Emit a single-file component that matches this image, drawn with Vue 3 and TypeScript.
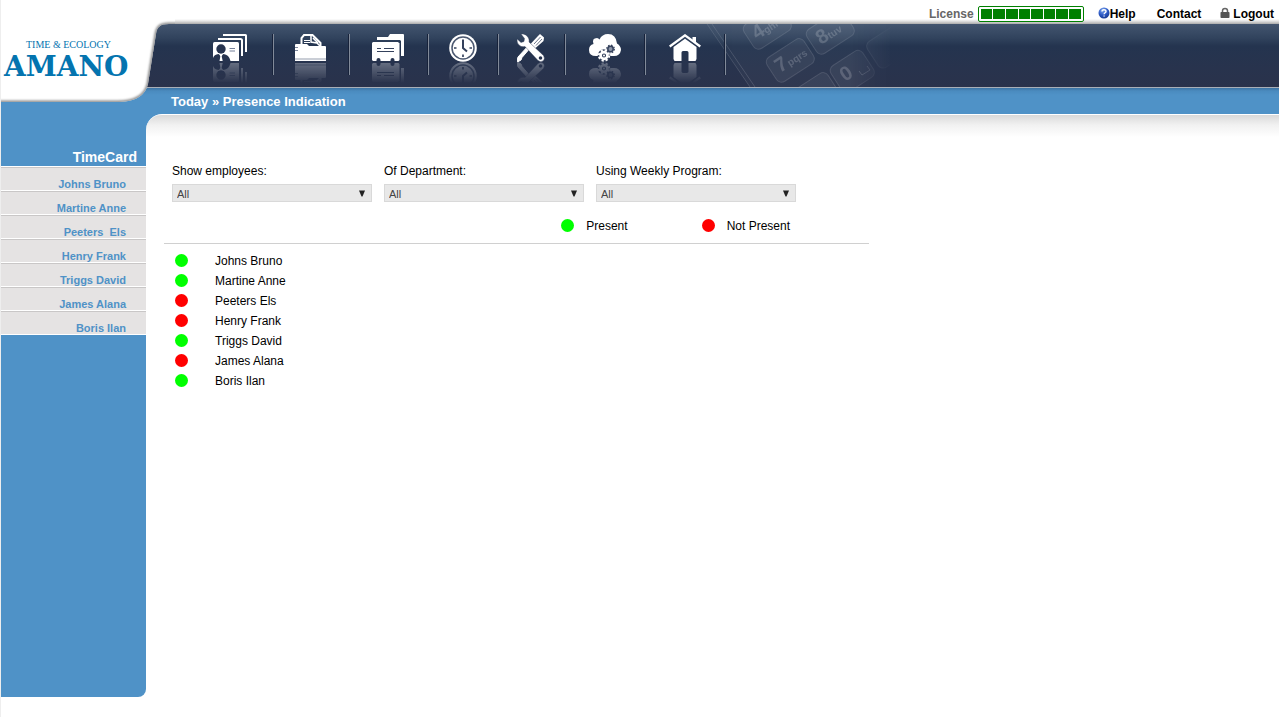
<script setup lang="ts">
import { computed, ref } from 'vue'

interface Employee {
  name: string
  sideName: string
  present: boolean
}

interface MenuEntry {
  id: string
  label: string
  iconWidth: number
  cellWidth: number
}

const employees: Employee[] = [
  { name: 'Johns Bruno', sideName: 'Johns Bruno', present: true },
  { name: 'Martine Anne', sideName: 'Martine Anne', present: true },
  { name: 'Peeters Els', sideName: 'Peeters\u00a0 Els', present: false },
  { name: 'Henry Frank', sideName: 'Henry Frank', present: false },
  { name: 'Triggs David', sideName: 'Triggs David', present: true },
  { name: 'James Alana', sideName: 'James Alana', present: false },
  { name: 'Boris Ilan', sideName: 'Boris Ilan', present: true },
]

const menu: MenuEntry[] = [
  { id: 'employees', label: 'Employees', iconWidth: 34, cellWidth: 85 },
  { id: 'cards', label: 'Cards', iconWidth: 32, cellWidth: 76 },
  { id: 'reports', label: 'Reports', iconWidth: 32, cellWidth: 79 },
  { id: 'time', label: 'Time', iconWidth: 28, cellWidth: 70 },
  { id: 'tools', label: 'Tools', iconWidth: 28, cellWidth: 67 },
  { id: 'cloud', label: 'Cloud settings', iconWidth: 32, cellWidth: 80 },
  { id: 'home', label: 'Home', iconWidth: 32, cellWidth: 80 },
]

const filters = [
  { id: 'show', label: 'Show employees:' },
  { id: 'department', label: 'Of Department:' },
  { id: 'program', label: 'Using Weekly Program:' },
]

const show = ref<Record<string, string>>({ show: 'All', department: 'All', program: 'All' })

const rows = computed(() =>
  employees.filter((e) => {
    if (show.value.show === 'Present') return e.present
    if (show.value.show === 'Not Present') return !e.present
    return true
  }),
)
</script>

<template>
  <div class="page">
    <header class="header">
      <div class="utility">
        <span class="license-label">License</span>
        <div class="license" role="img" aria-label="License usage">
          <i v-for="n in 8" :key="n"></i>
        </div>
        <a class="util-link help" href="#">
          <svg width="12" height="12" viewBox="0 0 12 12" aria-hidden="true">
            <defs>
              <radialGradient id="helpFill" cx="40%" cy="25%" r="75%">
                <stop offset="0" stop-color="#7fa8ee" />
                <stop offset="0.6" stop-color="#2a57c4" />
                <stop offset="1" stop-color="#173a93" />
              </radialGradient>
            </defs>
            <circle cx="6" cy="6" r="5.5" fill="url(#helpFill)" />
            <path d="M4 4.6C4 2.2 8 2.2 8 4.4C8 5.8 6.1 5.7 6.1 7.2M6.1 8.4V9.6" fill="none" stroke="#fff" stroke-width="1.4" />
          </svg>Help</a>
        <a class="util-link contact" href="#">Contact</a>
        <a class="util-link logout" href="#">
          <svg width="10" height="12" viewBox="0 0 10 12" aria-hidden="true">
            <path d="M2.5 6V3.8C2.5 0.6 7.5 0.6 7.5 3.8V6" fill="none" stroke="#666" stroke-width="1.5" />
            <rect x="0.5" y="5" width="9" height="6" rx="0.8" fill="#555" />
          </svg>Logout</a>
      </div>

      <nav class="navbar" aria-label="Main">
        <svg class="keypad" width="200" height="63" viewBox="0 0 200 63" aria-hidden="true">
          <defs>
            <linearGradient id="keypadFade" x1="0" x2="1" y1="0" y2="0">
              <stop offset="0" stop-color="#fff" stop-opacity="0.7" />
              <stop offset="0.2" stop-color="#fff" />
              <stop offset="0.75" stop-color="#fff" />
              <stop offset="0.97" stop-color="#fff" stop-opacity="0" />
            </linearGradient>
            <mask id="keypadMask"><rect width="200" height="63" fill="url(#keypadFade)" /></mask>
          </defs>
          <g mask="url(#keypadMask)">
            <path d="M7 0L50 63H190V0Z" fill="#fff" fill-opacity="0.03" />
            <path d="M12 0L55 63M7 0L50 63" stroke="#fff" stroke-opacity="0.14" fill="none" />
            <g fill="#fff" fill-opacity="0.05" stroke="#fff" stroke-opacity="0.12">
              <rect x="-22" y="-14" width="44" height="29" rx="6" transform="translate(67 3) rotate(-33)" />
              <rect x="-22" y="-14" width="44" height="29" rx="6" transform="translate(90 36) rotate(-33)" />
              <rect x="-22" y="-14" width="44" height="29" rx="6" transform="translate(130 8) rotate(-33)" />
              <rect x="-19" y="-15" width="38" height="31" rx="6" transform="translate(152 47) rotate(-33)" />
              <rect x="-22" y="-14" width="44" height="29" rx="6" transform="translate(114 70) rotate(-33)" />
              <rect x="-22" y="-15" width="44" height="31" rx="6" transform="translate(191 21) rotate(-33)" />
            </g>
            <g class="key-text" fill="#fff" fill-opacity="0.18">
              <g transform="translate(57 16) rotate(-33)"><text class="digit">4</text><text class="letters" x="11">ghi</text></g>
              <g transform="translate(80 49) rotate(-33)"><text class="digit">7</text><text class="letters" x="12">pqrs</text></g>
              <g transform="translate(121 21) rotate(-33)"><text class="digit">8</text><text class="letters" x="11">tuv</text></g>
              <g transform="translate(145 58) rotate(-33)"><text class="digit">0</text></g>
            </g>
            <path d="M159 47l3 4 8-5-3-4" stroke="#fff" stroke-opacity="0.2" fill="none" />
          </g>
        </svg>
        <ul class="menu">
          <li v-for="item in menu" :key="item.id" :style="{ width: item.cellWidth + 'px' }">
            <a href="#" class="menu-link" :aria-label="item.label">
              <svg :width="item.iconWidth" height="28" :viewBox="`0 0 ${item.iconWidth} 28`" aria-hidden="true">
                <g v-if="item.id === 'employees'">
                  <path d="M10 1H32.5Q33 1 33 1.5V18" fill="none" stroke="#fff" stroke-width="2" />
                  <path d="M5 5H27.5Q29 5 29 6.5V22" fill="none" stroke="#fff" stroke-width="2" />
                  <path d="M1.5 8H24.5Q26 8 26 9.5V27H0V9.5Q0 8 1.5 8Z" fill="#fff" />
                  <circle cx="8" cy="15" r="4.7" fill="#26334e" />
                  <path d="M0 27V24Q1 20.5 5.5 20L8 22L10.5 20Q16 20.5 17.5 27Z" fill="#26334e" />
                  <path d="M6.5 20.5H9.5L8.7 22.5L9.7 27H6.5L7.3 22.5Z" fill="#fff" />
                  <path d="M16.5 14.5H22M16.5 17H22" stroke="#75809a" />
                </g>
                <g v-else-if="item.id === 'cards'">
                  <path d="M6.5 10V4L9 1H17.5L25.5 9V12" fill="none" stroke="#fff" stroke-width="2" />
                  <path d="M16 2V8L22 9L25 12M18 4L23 9" fill="none" stroke="#fff" stroke-width="1.5" />
                  <path d="M9 6.5H15M9 8.5H15" stroke="#fff" />
                  <path d="M0 11Q0 10 1 10H12L14 12H30Q31 12 31 13V27H0Z" fill="#fff" />
                  <path d="M0 25H31" stroke="#b9bec8" stroke-width="1.5" />
                  <path d="M0 13.5H3M0 16.5H3" stroke="#7d879c" />
                </g>
                <g v-else-if="item.id === 'reports'">
                  <path d="M5 3H16L18 0H31Q32 0 32 1V22H29V7L28 6H5Z" fill="#fff" />
                  <path d="M1 8H26L27.5 9.5V26L26.5 27H1L0 26V9Z" fill="#fff" />
                  <path d="M5 14.5H9M12 14.5H22M5 17.5H22" stroke="#34415c" />
                  <path d="M4.5 28V26Q4.5 24 6.5 24T8.5 26V28ZM18.5 28V26Q18.5 24 20.5 24T22.5 26V28Z" fill="#26334e" />
                </g>
                <g v-else-if="item.id === 'time'">
                  <circle cx="14" cy="14" r="13.8" fill="#fff" />
                  <circle cx="14" cy="14" r="11" fill="none" stroke="#4b5870" stroke-width="1.5" />
                  <path d="M14 5.5V14L18 17.5" fill="none" stroke="#34415c" stroke-width="2" />
                  <path d="M5 14H7.5M20.5 14H23M14 20.5V23" stroke="#34415c" stroke-width="1.7" />
                </g>
                <g v-else-if="item.id === 'tools'">
                  <path d="M23 0L27 3.5L26.5 7L18 14.5L13.5 10L21 2Z" fill="#fff" />
                  <path d="M23.5 3L17 10M25 5L19 11.5" stroke="#46536c" stroke-width="0.8" />
                  <path d="M14 13L5 23.5L4 26L0.5 28L0 27L1 23L12 11Z" fill="#fff" stroke="#fff" />
                  <path d="M4 0Q9 -0.5 11.5 4Q12.5 6.5 12 8L26.5 21.5Q28.5 25 26 27Q23.500 28.5 21 26.5L8 12.5Q4 13.5 1.5 10.5Q-0.5 8 0.2 5L4 8.5L7 7.5L7.5 4.5Z" fill="#fff" stroke="#26334e" stroke-width="0.4" />
                  <circle cx="23.5" cy="24" r="1.8" fill="#26334e" />
                </g>
                <g v-else-if="item.id === 'cloud'">
                  <path d="M7 22Q0 22 0 16Q0 11 4.5 10Q2.5 4 8 4Q9.5 4 10.5 5.5Q13 0 19 0Q27 0 28 9.500Q32 12 32 16Q31 22 25 22Z" fill="#fff" />
                  <circle cx="21.5" cy="15" r="2.7" fill="#8b94a6" stroke="#34415c" stroke-width="1.5" />
                  <circle cx="21.5" cy="15" r="3.8" fill="none" stroke="#34415c" stroke-width="1.3" stroke-dasharray="1.5 1.5" />
                  <circle cx="15" cy="21.5" r="6.2" fill="#34415c" />
                  <circle cx="15" cy="21.5" r="5.2" fill="none" stroke="#fff" stroke-width="2" stroke-dasharray="2.2 1.9" />
                  <circle cx="15" cy="21.5" r="3.4" fill="none" stroke="#fff" stroke-width="2.6" />
                  <circle cx="15" cy="21.5" r="1" fill="#fff" />
                </g>
                <g v-else>
                  <path d="M23.5 3H27V10L23.5 7Z" fill="#fff" />
                  <path d="M0.7 12.5L16 1.3L31.3 12.5" fill="none" stroke="#fff" stroke-width="2.2" />
                  <path d="M4.5 13L16 4.8L27.5 13V25L26.5 27H19.5V18.5Q19.5 17 18 17H14Q12.5 17 12.5 18.5V27H5.5L4.5 25Z" fill="#fff" />
                </g>
              </svg>
            </a>
          </li>
        </ul>
      </nav>

      <div class="crumbs">Today » Presence Indication</div>

      <div class="brand">
        <svg class="plate" width="174" height="104" viewBox="0 0 174 104" aria-hidden="true">
          <defs>
            <clipPath id="plateClip">
              <path d="M-10 -10H200V24H168C159 24 156 27 155 34L147 84C144 97 132 102 116 102H-10Z" />
            </clipPath>
            <filter id="plateSoft" filterUnits="userSpaceOnUse" x="-20" y="0" width="220" height="120">
              <feGaussianBlur stdDeviation="1.3" />
            </filter>
          </defs>
          <g clip-path="url(#plateClip)">
            <rect width="174" height="104" fill="#fff" />
            <path d="M200 24H168C159 24 156 27 155 34L147 84C144 97 132 102 116 102H-10" fill="none" stroke="#8a8a8a" stroke-width="3" filter="url(#plateSoft)" />
          </g>
        </svg>
        <div class="brand-text">
          <span class="tagline">TIME &amp; ECOLOGY</span>
          <span class="wordmark">AMANO</span>
        </div>
      </div>
    </header>

    <div class="body">
      <aside class="sidebar">
        <h2>TimeCard</h2>
        <ul>
          <li v-for="e in employees" :key="e.name">
            <a href="#">{{ e.sideName }}</a>
          </li>
        </ul>
      </aside>

      <div class="corner">
        <main class="content">
          <form class="filters" @submit.prevent>
            <div v-for="f in filters" :key="f.id" class="field">
              <label :for="f.id">{{ f.label }}</label>
              <div class="select">
                <select :id="f.id" v-model="show[f.id]">
                  <option>All</option>
                  <template v-if="f.id === 'show'">
                    <option>Present</option>
                    <option>Not Present</option>
                  </template>
                </select>
                <svg width="8" height="7" viewBox="0 0 8 7" aria-hidden="true"><path d="M1 0.5H7L4.5 6.5H3.5Z" fill="#222" /></svg>
              </div>
            </div>
          </form>

          <div class="legend">
            <span class="legend-item"><i class="dot on"></i>Present</span>
            <span class="legend-item"><i class="dot off"></i>Not Present</span>
          </div>

          <table class="presence">
            <tbody>
              <tr v-for="e in rows" :key="e.name">
                <td class="status"><i class="dot" :class="e.present ? 'on' : 'off'" role="img" :aria-label="e.present ? 'Present' : 'Not Present'"></i></td>
                <td>{{ e.name }}</td>
              </tr>
            </tbody>
          </table>
        </main>
      </div>
    </div>
  </div>
</template>

<style>
body {
  margin: 0;
  background: #fff;
}
</style>

<style scoped>
.page {
  display: flex;
  flex-direction: column;
  box-sizing: border-box;
  min-height: 100vh;
  padding-bottom: 20px;
  border-left: 1px solid #eee;
  font: 12px/16px "Liberation Sans", Arial, sans-serif;
  color: #000;
  overflow-x: hidden;
}

ul {
  list-style: none;
  margin: 0;
  padding: 0;
}

a {
  text-decoration: none;
}

.header {
  position: relative;
}

.utility {
  position: relative;
  z-index: 2;
  display: flex;
  align-items: center;
  justify-content: flex-end;
  box-sizing: border-box;
  height: 24px;
  padding: 4px 5px 0 0;
  font-weight: bold;
}

.license-label {
  color: #666;
}

.license {
  display: flex;
  gap: 1px;
  box-sizing: border-box;
  width: 106px;
  height: 16px;
  margin: 0 14px 0 4px;
  padding: 2px;
  border: 1px solid green;
  border-radius: 2px;
  background: #fff;
}

.license i {
  flex: 1;
  background: green;
}

.util-link {
  display: flex;
  color: #000;
}

.contact {
  margin: 0 19px 0 21px;
}

.logout svg {
  margin: 1px 3px 0 0;
}

.help svg {
  margin-top: 1px;
}

.navbar {
  position: relative;
  height: 63px;
  border-bottom: 1px solid #a9afb8;
  background: linear-gradient(#43556f 0, #31435d 14px, #24344f 22px, #28334d 45px, #2a324b 100%);
}

.keypad {
  position: absolute;
  top: 0;
  left: 699px;
}

.key-text {
  font-family: "Liberation Sans", Arial, sans-serif;
}

.digit {
  font-size: 20px;
  font-weight: bold;
}

.letters {
  font-size: 10px;
  font-weight: bold;
}

.menu {
  display: flex;
  position: relative;
  padding: 10px 0 0 188px;
}

.menu li {
  display: flex;
  justify-content: center;
  box-sizing: border-box;
  height: 41px;
  padding-right: 2px;
  border-right: 1px solid #818a99;
  box-shadow: inset -1px 0 #17223a;
}

.menu-link {
  display: block;
  height: 28px;
  -webkit-box-reflect: below 0 linear-gradient(transparent 25%, rgba(255, 255, 255, 0.3));
}

.menu-link svg {
  display: block;
}

.crumbs {
  height: 26px;
  padding-left: 170px;
  background: linear-gradient(#3f74a3 0, #4a8bbf 3px, #4f92c7 7px);
  color: #fff;
  font-size: 13px;
  font-weight: bold;
  line-height: 28px;
}

.brand {
  position: absolute;
  top: 0;
  left: 0;
  width: 100%;
  height: 114px;
  pointer-events: none;
}

.brand::before {
  content: "";
  position: absolute;
  top: 0;
  right: 0;
  left: 174px;
  height: 24px;
  background: linear-gradient(#fff 19px, #e4e4e4 21px, #aaa 24px);
}

.plate {
  position: absolute;
  top: 0;
  left: 0;
}

.brand-text {
  position: relative;
  display: flex;
  flex-direction: column;
  width: 135px;
  padding-top: 39px;
  text-align: center;
  color: #0474af;
}

.tagline {
  font: 10px/12px "Liberation Serif", "Times New Roman", serif;
}

.wordmark {
  align-self: flex-start;
  padding-left: 3px;
  font: bold 28px/32px "DejaVu Serif", serif;
}

.body {
  display: flex;
  flex: 1;
}

.sidebar {
  flex: 0 0 145px;
  border-bottom-right-radius: 8px;
  background: #4f92c7;
}

.sidebar h2 {
  margin: 0;
  padding: 35px 9px 1px 0;
  color: #fff;
  font-size: 14px;
  line-height: 16px;
  text-align: right;
}

.sidebar ul {
  border-bottom: 1px solid #fff;
}

.sidebar li {
  box-sizing: border-box;
  height: 24px;
  padding: 11px 20px 0 0;
  border-top: 1px solid #fff;
  background: #e5e3e3;
  box-shadow: inset 0 1px #c9c7c7;
  text-align: right;
}

.sidebar a {
  display: block;
  color: #4f92c7;
  font-size: 11px;
  font-weight: bold;
  line-height: 12px;
}

.corner {
  flex: 1;
  background: linear-gradient(#4f92c7 16px, #fff 16px);
}

.content {
  box-sizing: border-box;
  height: 100%;
  padding: 48px 18px 0;
  border-top: 1px solid #fff;
  border-top-left-radius: 16px;
  background: linear-gradient(#d9d9d9 0, #f1f1f1 10px, #fff 22px);
}

.filters {
  display: flex;
  flex-wrap: wrap;
  gap: 12px;
  padding-left: 8px;
}

.field {
  width: 200px;
}

.field label {
  display: block;
  margin-bottom: 5px;
}

.select {
  display: flex;
  position: relative;
}

.select select {
  appearance: none;
  width: 100%;
  height: 18px;
  padding: 1px 4px 0;
  border: 1px solid #d9d9d9;
  border-radius: 0;
  background: #e8e8e8;
  color: #444;
  font: 11px/14px "Liberation Sans", Arial, sans-serif;
}

.select svg {
  position: absolute;
  top: 6px;
  right: 6px;
  pointer-events: none;
}

.legend {
  display: flex;
  justify-content: flex-end;
  gap: 74px;
  box-sizing: border-box;
  max-width: 705px;
  padding: 16px 79px 9px 0;
  border-bottom: 1px solid #d0d0d0;
}

.legend-item {
  display: flex;
  align-items: center;
  gap: 12px;
}

.dot {
  display: block;
  width: 13px;
  height: 13px;
  margin-bottom: 2px;
  border-radius: 50%;
}

.on {
  background: #0f0;
}

.off {
  background: #f00;
}

.presence {
  margin-top: 7px;
  border-collapse: collapse;
}

.presence td {
  height: 20px;
  padding: 0;
}

.presence .status {
  width: 40px;
  padding-left: 11px;
}
</style>
